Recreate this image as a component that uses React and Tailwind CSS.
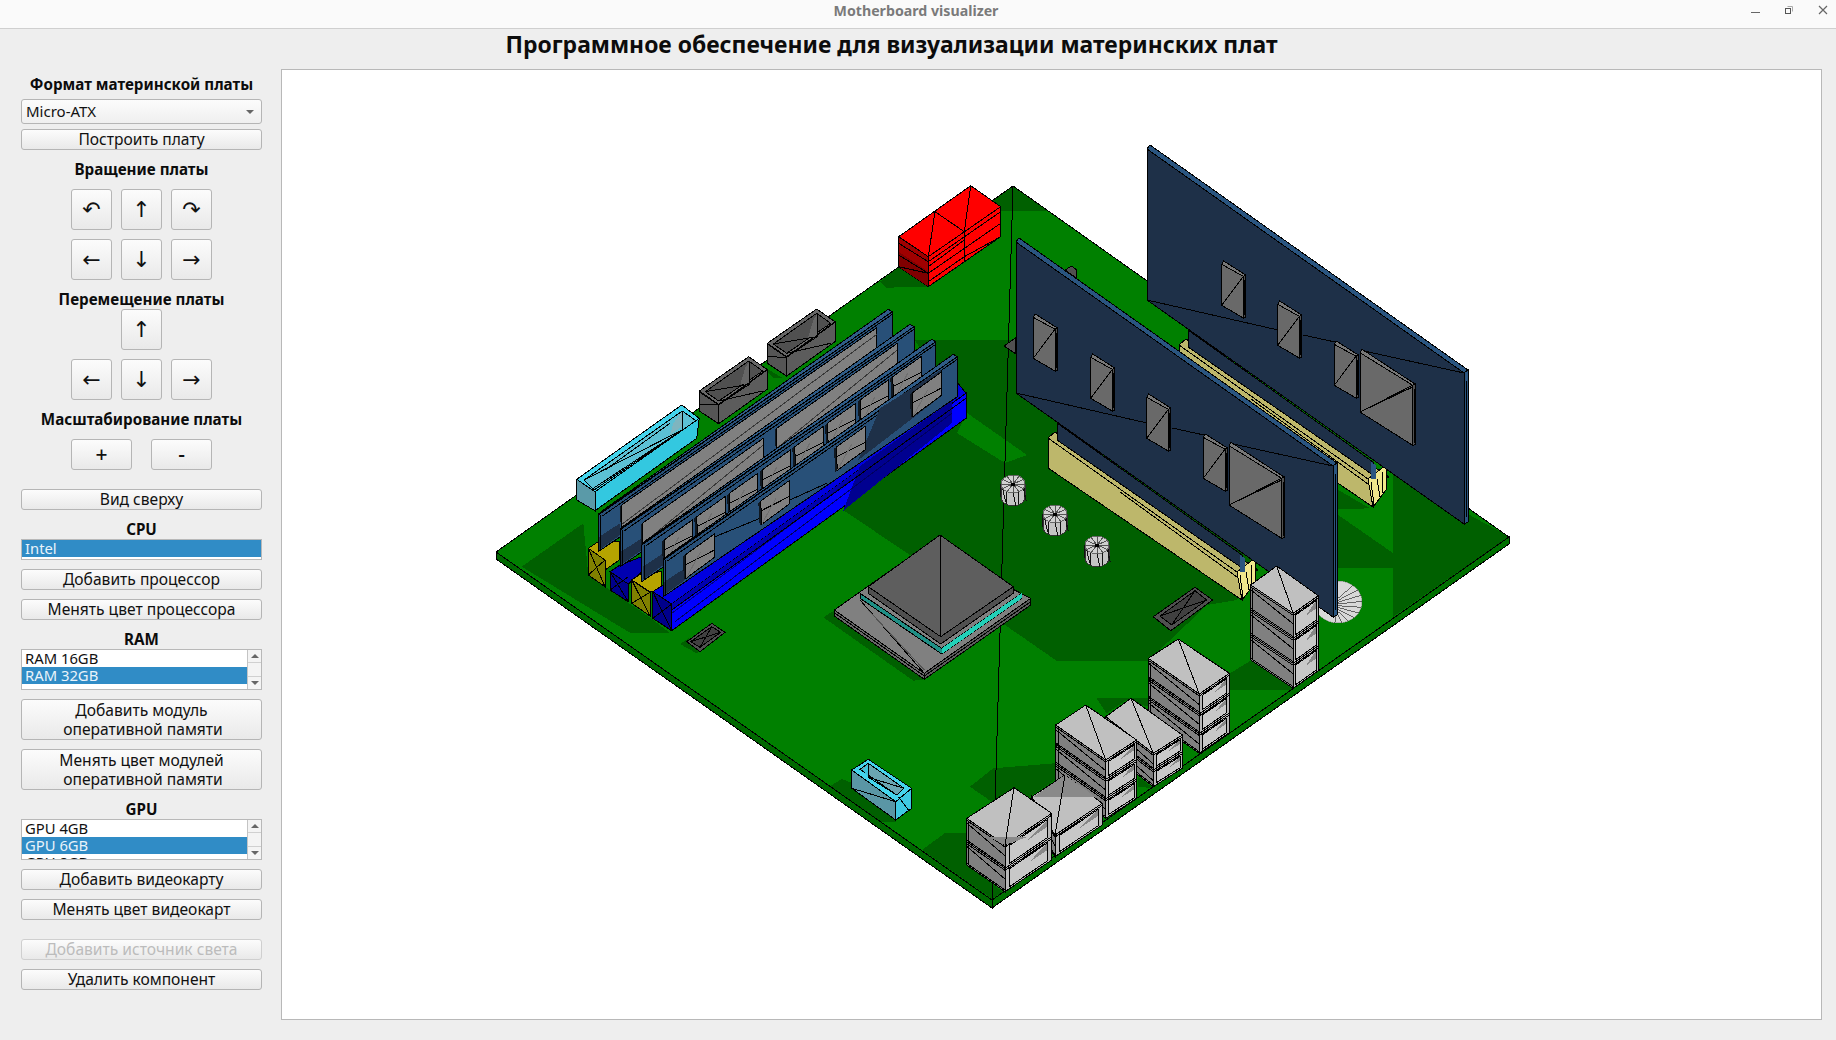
import React from "react";

const Z = { p: [0, 0], z4: [560, 160], z5: [560, 380], z6: [1000, 120], z7: [940, 440], z9: [480, 520], z10: [1230, 440] };
const conv = (z, d, ox = 0, oy = 0) => {
  const s = z === "p" ? 1 : 1 / 3;
  const [x0, y0] = Z[z];
  return d.trim().split(/\s+/).map((p) => {
    const [x, y] = p.split(",").map(Number);
    return `${(x * s + x0 + ox).toFixed(1)},${(y * s + y0 + oy).toFixed(1)}`;
  }).join(" ");
};
const P = ({ z = "p", d, f = "none", s = "#000", ox, oy, w = 1 }) => (
  <polygon points={conv(z, d, ox, oy)} fill={f} stroke={s} strokeWidth={w} />
);
const F = ({ z = "p", d, f, ox, oy }) => <polygon points={conv(z, d, ox, oy)} fill={f} />;
const L = ({ z = "p", d, ox, oy, s = "#000" }) => (
  <polyline points={conv(z, d, ox, oy)} fill="none" stroke={s} strokeWidth="1" />
);

const GREEN = "#008000";
const DARK = "#006000";

function Board() {
  return (
    <g>
      <P d="496,552 992,900 992,908 496,559" f="#006800" />
      <P d="992,900 1509,537 1509,544 992,908" f="#007000" />
      <F d="1013,186 1509,537 992,900 496,552" f={GREEN} />
      <F d="980,211 1013,186 1048,211" f={DARK} />
      <F d="915,340 1030,340 1255,500 1255,560 1237,600 1207,605 1148,661 1057,661 1005,625 910,555 843,510 960,415" f={DARK} />
      <F d="967,413 1027,455 1005,463 957,433" f={GREEN} />
      <F z="z10" d="490,100 838,290 490,530" f={DARK} />
      <F z="z10" d="325,225 490,340 490,383 325,383" f={DARK} />
      <F z="z10" d="325,150 420,205 325,208" f={DARK} />
      <F z="z4" d="960,365 1015,322 1105,380 980,383" f={DARK} />
      <F z="z4" d="610,620 670,655 640,655" f={DARK} />
      <F z="z9" d="125,140 310,10 325,165 520,300 568,338 450,338 420,320" f={DARK} />
      <F z="z9" d="1030,292 1065,270 1335,478 1300,482" f={DARK} />
      <F z="z9" d="600,372 625,355 665,392 650,400" f={DARK} />
      <F z="z9" d="1048,800 1085,777 1120,790 1248,905 1200,905" f={DARK} />
      <F d="922,850 945,833 967,833 967,865 1003,892 992,899" f={DARK} />
      <F z="z7" d="90,1040 160,985 345,970 345,1020 270,1070 160,1090 140,1075" f={DARK} />
      <F z="z7" d="470,775 625,775 625,800 560,780 500,820" f={DARK} />
      <F z="z7" d="870,750 1060,750 1060,745 935,660 870,700" f={DARK} />
      <F z="z7" d="595,1010 640,1045 595,1040" f={DARK} />
      <P d="1013,186 1509,537 992,900 496,552" />
      <L d="1013,186 992,908" />
    </g>
  );
}

function RedBox() {
  const z = "z4";
  return (
    <g>
      <P z={z} d="1016,230 1105,290 1105,380 1016,320" f="#a00000" />
      <F z={z} d="1016,275 1105,335 1105,380 1016,320" f="#800000" />
      <P z={z} d="1105,290 1322,140 1322,230 1105,380" f="#ff0000" />
      <P z={z} d="1016,230 1232,77 1322,140 1105,290" f="#ff0000" />
      <L z={z} d="1125,155 1105,290" />
      <L z={z} d="1232,77 1213,215 1213,305" />
      <L z={z} d="1125,155 1213,215" />
      <L z={z} d="1016,250 1105,305" />
      <L z={z} d="1016,285 1105,340 1016,320" />
      <L z={z} d="1105,305 1322,155" />
      <L z={z} d="1105,340 1322,190" />
      <L z={z} d="1105,320 1213,240" />
      <L z={z} d="1105,365 1213,290 1322,230" />
    </g>
  );
}

function Port({ ox = 0, oy = 0 }) {
  const c = { z: "z4", ox, oy };
  return (
    <g>
      <P {...c} d="622,550 770,447 825,485 680,590" f="#686868" />
      <P {...c} d="640,552 770,460 812,490 680,580" f="#505050" />
      <F {...c} d="760,480 772,462 772,530 745,530" f="#666666" />
      <P {...c} d="622,552 680,592 680,648 622,610" f="#555555" />
      <P {...c} d="680,592 825,487 825,545 680,648" f="#5c5c5c" />
      <L {...c} d="622,590 680,592" />
      <L {...c} d="640,552 770,530" />
      <L {...c} d="680,580 812,550" />
      <L {...c} d="772,460 772,530 680,590" />
    </g>
  );
}

function CyanLarge() {
  const z = "z5";
  return (
    <g>
      <P z={z} d="50,298 365,75 418,115 105,335" f="#45d4ec" />
      <P z={z} d="72,300 367,93 408,122 102,330" f="#5cc0d4" />
      <F z={z} d="340,130 366,95 366,140 330,165" f="#7fb5bf" />
      <P z={z} d="50,298 105,335 105,392 50,360" f="#5a9aa8" />
      <P z={z} d="105,335 418,115 410,175 105,392" f="#33c8e0" />
      <L z={z} d="72,300 366,150 366,95" />
      <L z={z} d="100,325 366,150" />
      <L z={z} d="135,270 330,130" />
    </g>
  );
}

function CyanSmall() {
  const z = "z9";
  return (
    <g>
      <P z={z} d="1115,750 1165,718 1295,805 1247,845" f="#45d4ec" />
      <P z={z} d="1140,748 1165,730 1272,805 1250,825" f="#6aa6b2" />
      <F z={z} d="1147,750 1165,733 1165,770" f="#3fc5dc" />
      <P z={z} d="1115,750 1247,845 1247,900 1115,805" f="#5a96a5" />
      <P z={z} d="1247,845 1295,805 1295,865 1247,900" f="#3fc9e2" />
      <L z={z} d="1165,730 1165,772 1250,825" />
      <L z={z} d="1165,772 1272,805" />
      <L z={z} d="1115,805 1247,845" />
      <L z={z} d="1255,830 1285,870" />
    </g>
  );
}

function Chip({ z = "z5", x, y, w = 87, dy = 62, h = 70 }) {
  return (
    <g>
      <F z={z} d={`${x - 7},${y + 5} ${x},${y} ${x + 3},${y + h} ${x - 3},${y + h + 4}`} f="#101820" />
      <P z={z} d={`${x},${y} ${x + w},${y - dy} ${x + w},${y - dy + h} ${x + 3},${y + h}`} f="#808080" />
      <L z={z} d={`${x},${y + 30} ${x + w},${y + 48 - dy} `} />
      <L z={z} d={`${x + 3},${y + h} ${x + w - 40},${y - 10}`} s="#707070" />
    </g>
  );
}

function Ram() {
  const z = "z5";
  const modBlue = "#285078";
  const navy = "#1e3048";
  const faces = [0, 1, 2, 3].map((i) => [65 * i, 45 * i]);
  const mod = (i) => {
    const [a, b] = faces[i];
    const q = (x, y) => `${x + a},${y + b}`;
    return (
      <g key={i}>
        <P z={z} d={`${q(115, 405)} ${q(997, -205)} ${q(997, -85)} ${q(115, 515)}`} f={modBlue} />
        <F z={z} d={`${q(118, 510)} ${q(180, 465)} ${q(180, 430)} ${q(118, 470)}`} f={navy} />
        <P z={z} d={`${q(115, 403)} ${q(127, 392)} ${q(985, -212)} ${q(997, -205)}`} f="#2f5c88" />
        <L z={z} d={`${q(127, 408)} ${q(997, -197)}`} />
        <L z={z} d={`${q(122, 405)} ${q(122, 510)}`} />
      </g>
    );
  };
  return (
    <g>
      <P z={z} d="85,505 115,485 178,485 178,540 135,570" f="#b5a400" />
      <P z={z} d="85,505 135,540 135,620 85,585" f="#808000" />
      <L z={z} d="85,585 135,540" /><L z={z} d="85,505 135,620" />
      {mod(0)}
      <Strip x0={185} y0={375} x1={950} y1={-157} h={68} />
      <P z={z} d="150,575 180,555 245,530 245,575 205,612" f="#0000b0" />
      <P z={z} d="150,575 205,612 205,665 150,630" f="#00008b" />
      <L z={z} d="150,630 205,590" /><L z={z} d="150,575 205,665" />
      {mod(1)}
      <Strip x0={247} y0={430} x1={610} y1={175} h={72} />
      <Strip x0={650} y0={145} x1={1012} y1={-110} h={70} />
      <P z={z} d="215,600 245,580 305,575 305,630 270,635" f="#b5a400" />
      <P z={z} d="215,600 270,637 270,708 215,670" f="#808000" />
      <L z={z} d="215,670 270,637" /><L z={z} d="215,600 270,708" />
      {mod(2)}
      {[0, 1, 2, 3, 4, 5, 6, 7].map((i) => (
        <Chip key={i} x={312 + 98 * i} y={480 - 70 * i} w={85} dy={60} h={70} />
      ))}
      <P z={z} d="278,635 310,615 1190,5 1218,40 335,672" f="#0000e0" />
      <P z={z} d="335,672 1218,40 1218,115 335,752" f="#0000ff" />
      <F z={z} d="335,672 1175,70 1175,88 335,690" f="#0000b0" />
      <F z={z} d="900,258 1175,62 1175,130 850,392" f="#000090" />
      <L z={z} d="335,700 860,310" s="#000080" />
      <L z={z} d="335,690 1218,55" />
      <L z={z} d="345,725 1175,100" s="#000060" />
      <P z={z} d="278,635 335,672 335,752 278,715" f="#00008b" />
      <L z={z} d="278,715 335,672" /><L z={z} d="278,635 335,752" />
      {mod(3)}
      <F z={z} d="895,240 960,85 1055,25 1142,-30 1142,50" f={navy} />
      <L z={z} d="465,470 600,415" /><L z={z} d="690,360 800,310" />
      {[0, 1, 2, 3].map((i) => (
        <Chip key={i} x={375 + 227 * i} y={525 - 162 * i} w={87} dy={62} h={70} />
      ))}
    </g>
  );
}

function Strip({ x0, y0, x1, y1, h }) {
  const z = "z5";
  return (
    <g>
      <F z={z} d={`${x0 - 5},${y0 + 4} ${x0},${y0} ${x0 + 3},${y0 + h} ${x0 - 3},${y0 + h}`} f="#101820" />
      <P z={z} d={`${x0},${y0} ${x1},${y1} ${x1},${y1 + h} ${x0},${y0 + h}`} f="#808080" />
      <L z={z} d={`${x0},${y0 + h - 10} ${x1},${y1 + 20}`} s="#383838" />
    </g>
  );
}

function Cpu() {
  const z = "z5";
  return (
    <g>
      <P z={z} d="823,690 1093,880 1093,898 823,708" f="#686868" />
      <P z={z} d="1093,880 1412,655 1412,675 1093,898" f="#5c5c5c" />
      <P z={z} d="823,690 1100,495 1412,655 1093,880" f="#808080" />
      <L z={z} d="823,698 1093,888" /><L z={z} d="1093,888 1412,665" />
      <L z={z} d="900,660 1093,880" /><L z={z} d="925,690 1093,870" s="#555" />
      <P z={z} d="900,640 1145,805 1385,640 1385,655 1145,822 900,655" f="#1f8f85" />
      <F z={z} d="1145,805 1385,640 1385,655 1145,822" f="#22d0b8" />
      <P z={z} d="925,620 1142,770 1360,620 1360,640 1142,792 925,640" f="#505050" />
      <P z={z} d="925,620 1140,465 1360,620 1142,770" f="#5e5e5e" />
      <L z={z} d="1142,465 1142,770" />
    </g>
  );
}

function SmallChip({ z = "z5", d1, d2, l }) {
  return (
    <g>
      <P z={z} d={d1} f="#505050" />
      <P z={z} d={d2} f="#404040" />
      {l.map((x, i) => <L key={i} z={z} d={x} />)}
    </g>
  );
}

function Capacitor({ cx, cy }) {
  const rx = 12, ry = 9, h = 13;
  const spokes = Array.from({ length: 12 }, (_, i) => {
    const a = (i / 12) * Math.PI * 2;
    return [cx + Math.cos(a) * rx, cy + Math.sin(a) * ry];
  });
  const side = Array.from({ length: 7 }, (_, i) => {
    const a = Math.PI - (i / 6) * Math.PI;
    const x = cx + Math.cos(a) * rx;
    return [x, cy + Math.sin(a) * ry];
  });
  return (
    <g>
      <path d={`M${cx - rx},${cy} L${cx - rx},${cy + h} A${rx},${ry} 0 0 0 ${cx + rx},${cy + h} L${cx + rx},${cy} Z`} fill="#c4c4c4" stroke="#333" strokeWidth="1" />
      {side.map(([x, y], i) => (
        <line key={i} x1={x} y1={y} x2={x + (i % 2 ? 3 : -1)} y2={y + h} stroke="#111" strokeWidth="1" />
      ))}
      <ellipse cx={cx} cy={cy} rx={rx} ry={ry} fill="#d0d0d0" stroke="#666" strokeWidth="1" />
      {spokes.map(([x, y], i) => (
        <line key={i} x1={cx} y1={cy} x2={x} y2={y} stroke="#555" strokeWidth="1" />
      ))}
      <circle cx={cx} cy={cy + 0.5} r="2" fill="#000" />
    </g>
  );
}

function Disc() {
  const cx = 1338, cy = 602, rx = 24, ry = 21;
  const sp = Array.from({ length: 10 }, (_, i) => -0.9 + (i / 9) * 2.6);
  return (
    <g>
      <ellipse cx={cx} cy={cy} rx={rx} ry={ry} fill="#d8d8d8" stroke="#999" strokeWidth="0.6" />
      {sp.map((a, i) => (
        <line key={i} x1={cx - 2} y1={cy - 2 + i * 1.4} x2={cx + Math.cos(a) * rx} y2={cy + Math.sin(a) * ry} stroke="#333" strokeWidth="0.7" />
      ))}
    </g>
  );
}

function CardChip({ x, y, w, dy, h, ox, oy }) {
  const c = { z: "z6", ox, oy };
  return (
    <g>
      <P {...c} d={`${x},${y + 2} ${x + 6},${y - 8} ${x + w},${y + dy - 4} ${x + w - 6},${y + dy + 2}`} f="#787878" />
      <P {...c} d={`${x + w - 7},${y + dy} ${x + w},${y + dy - 4} ${x + w},${y + dy + h - 2} ${x + w - 7},${y + dy + h}`} f="#505050" />
      <P {...c} d={`${x},${y + 2} ${x + w - 7},${y + dy} ${x + w - 7},${y + dy + h} ${x},${y + h}`} f="#696969" />
      <L {...c} d={`${x},${y + h} ${x + w - 7},${y + dy}`} />
      {w > 100 && <L {...c} d={`${x},${y + h} ${x + w - 7},${y + dy + 5}`} />}
      <L {...c} d={`${x + w - 3},${y + dy + 10} ${x + w - 3},${y + dy + h - 8}`} s="#000" />
    </g>
  );
}

function Gpu({ ox, oy, first = true }) {
  const c = { ox, oy };
  return (
    <g>
      <P {...c} d="1048,438 1055,432 1258,570 1237,575" f="#bdb76b" />
      <P {...c} d="1048,438 1237,572 1242,600 1048,468" f="#bdb76b" />
      <P {...c} d="1237,572 1255,558 1255,583 1242,600" f="#f0e68c" />
      <L {...c} d="1240,575 1243,598" /><L {...c} d="1246,572 1249,590" /><L {...c} d="1251,565 1252,586" />
      <L {...c} d="1120,492 1237,577" />
      <P {...c} d="1016,240 1333,466 1333,617 1016,393" f="#1e3048" />
      <P {...c} d="1016,242 1019,238 1337,463 1333,466" f="#2a5580" />
      <P {...c} d="1333,466 1337,463 1337,615 1333,617" f="#2a5580" />
      <L {...c} d="1335,474 1335,610" />
      <P {...c} d="1057,423 1242,555 1242,568 1057,440" f="#1e3048" />
      <F {...c} d="1240,555 1245,558 1245,572 1240,572" f="#2a5580" />
      <L {...c} d="1016,393 1147,423" />
      <L {...c} d="1172,428 1204,435" />
      <L {...c} d="1233,444 1333,466" />
      {first && <CardChip x={100} y={590} w={72} dy={38} h={125} ox={ox} oy={oy} />}
      <CardChip x={272} y={710} w={72} dy={38} h={125} ox={ox} oy={oy} />
      <CardChip x={440} y={830} w={72} dy={38} h={125} ox={ox} oy={oy} />
      <CardChip x={610} y={950} w={72} dy={38} h={125} ox={ox} oy={oy} />
      <CardChip x={687} y={975} w={165} dy={100} h={180} ox={ox} oy={oy} />
    </g>
  );
}

function Stack({ l, b, r, f, H, tiers, shade }) {
  const z = "z7";
  const pt = (p, dy = 0) => `${p[0]},${p[1] + dy}`;
  const lerp = (a, c, t) => [a[0] + (c[0] - a[0]) * t, a[1] + (c[1] - a[1]) * t];
  const th = H / tiers;
  const els = [];
  for (let i = 0; i < tiers; i++) {
    const y = i * th;
    const a = lerp(f, r, 0.1);
    const e = lerp(f, r, 0.92);
    const tp = 10, bt = th - 6;
    els.push(
      <g key={i}>
        <F z={z} d={`${pt(a, y + tp)} ${pt(e, y + tp)} ${pt(e, y + bt)} ${pt(a, y + bt)}`} f="#c8c8c8" />
        <F z={z} d={`${pt(e, y + tp)} ${pt(e, y + th * 0.45)} ${pt(lerp(f, r, 0.5), y + th * 0.45)}`} f="#888888" />
        <P z={z} d={`${pt(a, y + tp)} ${pt(e, y + tp)} ${pt(e, y + bt)} ${pt(a, y + bt)}`} />
        <L z={z} d={`${pt(l, y + 6)} ${pt(f, y + 6)} ${pt(r, y + 6)}`} />
        <L z={z} d={`${pt(l, y + th)} ${pt(f, y + th)} ${pt(r, y + th)}`} />
        <L z={z} d={`${pt(l, y + th - 5)} ${pt(f, y + th - 5)}`} />
        <L z={z} d={`${pt(l, y + 14)} ${pt(f, y + 32)}`} />
      </g>
    );
  }
  return (
    <g>
      <P z={z} d={`${pt(l)} ${pt(f)} ${pt(f, H)} ${pt(l, H)}`} f="#808080" />
      <P z={z} d={`${pt(f)} ${pt(r)} ${pt(r, H)} ${pt(f, H)}`} f="#b8b8b8" />
      {els}
      <P z={z} d={`${pt(l)} ${pt(b)} ${pt(r)} ${pt(f)}`} f="#c0c0c0" />
      {shade && <F z={z} d={shade} f="#8a8a8a" />}
      <L z={z} d={`${pt(b)} ${pt(f)}`} />
      <L z={z} d={`${pt(l, 8)} ${pt(l, H - 8)}`} />
      <L z={z} d={`${pt(lerp(l, f, 0.05), 8)} ${pt(lerp(l, f, 0.05), H - 4)}`} />
    </g>
  );
}

function Scene() {
  return (
    <svg width="1539" height="948" viewBox="282 70 1539 948" shapeRendering="crispEdges" className="block">
      <Board />
      <RedBox />
      <P z="z6" d="12,678 45,655 45,700" f="#505050" />
      <P z="z6" d="195,450 215,438 230,450 230,475" f="#505050" />
      <Gpu ox={131} oy={-93} first={false} />
      <Disc />
      <Gpu ox={0} oy={0} />
      <Port />
      <Port ox={-68} oy={47.7} />
      <CyanLarge />
      <Ram />
      <Cpu />
      <SmallChip d1="380,785 455,730 495,757 420,815" d2="392,785 455,740 482,757 420,802" l={["392,785 482,757", "420,802 455,740"]} />
      <SmallChip z="z7" d1="640,530 765,442 818,480 692,572" d2="660,528 765,452 800,480 695,555" l={["660,528 800,480", "695,555 765,452"]} />
      <CyanSmall />
      <Capacitor cx={1013} cy={484} />
      <Capacitor cx={1055} cy={514} />
      <Capacitor cx={1097} cy={545} />
      <Stack l={[932, 435]} b={[1010, 378]} r={[1135, 467]} f={[1060, 520]} H={225} tiers={3} />
      <Stack l={[625, 655]} b={[715, 597]} r={[868, 700]} f={[778, 762]} H={178} tiers={3} />
      <Stack l={[497, 830]} b={[573, 775]} r={[727, 885]} f={[640, 940]} H={100} tiers={2} />
      <Stack l={[347, 855]} b={[437, 795]} r={[590, 900]} f={[497, 960]} H={175} tiers={3} />
      <Stack l={[275, 1070]} b={[375, 1005]} r={[487, 1090]} f={[345, 1185]} H={65} tiers={1} shade="278,1072 375,1005 468,1072" />
      <Stack l={[80, 1135]} b={[222, 1043]} r={[335, 1120]} f={[195, 1215]} H={140} tiers={2} shade="145,1190 265,1190 195,1215" />
    </svg>
  );
}

const FONT = "font-['Noto_Sans',sans-serif]";
const btnBase = "flex items-center justify-center rounded-[3px] border border-[#b5b5b5] bg-linear-to-b from-[#fcfcfc] to-[#e9e9e9] text-[#111]";

function Btn({ children, className = "h-[21px]", disabled }) {
  return (
    <div className={`${btnBase} ${className} w-full mt-[9px] text-center text-[15.6px] leading-[19px] ${disabled ? "!text-[#bcbcbc] !border-[#cfcfcf]" : ""}`}>
      {children}
    </div>
  );
}

function Label({ children, className = "mt-[9px]" }) {
  return <div className={`h-[20px] ${className} flex items-center justify-center font-bold text-[15.2px] text-[#0c0c0c]`}>{children}</div>;
}

function Arrow({ children, className = "" }) {
  return (
    <div className={`${btnBase} w-[41px] h-[41px] font-['DejaVu_Sans',sans-serif] text-[22px] ${className}`}>{children}</div>
  );
}

function Row({ children, className = "mt-[9px]" }) {
  return <div className={`flex justify-center gap-[9px] ${className}`}>{children}</div>;
}

function ListBox({ items, selected, height, scroll, className = "" }) {
  return (
    <div className={`flex w-full border border-[#b8b8b8] bg-white overflow-hidden ${height} ${className}`}>
      <div className="flex-1 min-w-0">
        {items.map((t, i) => (
          <div key={t} className={`h-[17px] px-[3px] leading-[17px] text-[14.8px] ${i === selected ? "bg-[#308cc6] text-[#e9f3fa]" : "text-[#111]"}`}>{t}</div>
        ))}
      </div>
      {scroll && (
        <div className="w-[14px] shrink-0 flex flex-col border-l border-[#c4c4c4] bg-[#f4f4f4]">
          <div className="h-[13px] flex items-center justify-center border-b border-[#d0d0d0]">
            <div className="w-0 h-0 border-x-[4px] border-x-transparent border-b-[4px] border-b-[#666]" />
          </div>
          <div className="flex-1" />
          <div className="h-[13px] flex items-center justify-center border-t border-[#d0d0d0]">
            <div className="w-0 h-0 border-x-[4px] border-x-transparent border-t-[4px] border-t-[#666]" />
          </div>
        </div>
      )}
    </div>
  );
}

function Sidebar() {
  return (
    <div className="w-[241px] flex flex-col shrink-0">
      <Label className="mt-[5px]">Формат материнской платы</Label>
      <div className="mt-[5px] h-[25px] flex items-center justify-between pl-[4px] pr-[7px] rounded-[3px] border border-[#b5b5b5] bg-linear-to-b from-[#fcfcfc] to-[#efefef] text-[#111] text-[15px]">
        <span>Micro-ATX</span>
        <div className="w-0 h-0 border-x-[4px] border-x-transparent border-t-[4px] border-t-[#666]" />
      </div>
      <Btn className="h-[21px] !mt-[5px]">Построить плату</Btn>
      <Label>Вращение платы</Label>
      <Row className="mt-[10px]"><Arrow>↶</Arrow><Arrow>↑</Arrow><Arrow>↷</Arrow></Row>
      <Row><Arrow>←</Arrow><Arrow>↓</Arrow><Arrow>→</Arrow></Row>
      <Label>Перемещение платы</Label>
      <Row className="mt-0"><Arrow>↑</Arrow></Row>
      <Row><Arrow>←</Arrow><Arrow>↓</Arrow><Arrow>→</Arrow></Row>
      <Label>Масштабирование платы</Label>
      <div className="flex justify-center gap-[19px] mt-[10px]">
        <div className={`${btnBase} w-[61px] h-[31px] text-[21px] font-medium`}>+</div>
        <div className={`${btnBase} w-[61px] h-[31px] text-[21px] font-medium`}>-</div>
      </div>
      <Btn className="h-[21px] !mt-[19px]">Вид сверху</Btn>
      <Label>CPU</Label>
      <ListBox items={["Intel"]} selected={0} height="h-[21px]" />
      <Btn>Добавить процессор</Btn>
      <Btn>Менять цвет процессора</Btn>
      <Label>RAM</Label>
      <ListBox items={["RAM 16GB", "RAM 32GB"]} selected={1} height="h-[41px]" scroll />
      <Btn className="h-[41px]"><span>Добавить модуль<br /><span className="pl-[3px]">оперативной памяти</span></span></Btn>
      <Btn className="h-[41px]"><span>Менять цвет модулей<br /><span className="pl-[3px]">оперативной памяти</span></span></Btn>
      <Label>GPU</Label>
      <ListBox items={["GPU 4GB", "GPU 6GB", "GPU 8GB"]} selected={1} height="h-[41px]" scroll />
      <Btn>Добавить видеокарту</Btn>
      <Btn>Менять цвет видеокарт</Btn>
      <Btn className="h-[21px] !mt-[19px]" disabled>Добавить источник света</Btn>
      <Btn>Удалить компонент</Btn>
    </div>
  );
}

function TitleBar() {
  return (
    <div className="relative h-[29px] shrink-0 flex items-center justify-center border-b border-[#cfcfcf] bg-[#fafafa]">
      <span className="text-[14.2px] font-bold text-[#7a7a7a] pb-[7px] pr-[4px]">Motherboard visualizer</span>
      <div className="absolute right-0 top-0 h-[28px]">
        <svg width="85" height="28" viewBox="0 0 85 28" className="block">
          <line x1="0" y1="12.5" x2="9" y2="12.5" stroke="#666" strokeWidth="1" />
          <rect x="34.5" y="8.5" width="5" height="5" fill="none" stroke="#555" strokeWidth="1" />
          <path d="M36.5 6.5h5v5" fill="none" stroke="#aaa" strokeWidth="1" />
          <path d="M68 6l8 8M76 6l-8 8" stroke="#666" strokeWidth="1.2" />
        </svg>
      </div>
    </div>
  );
}

export default function App() {
  return (
    <div className={`w-[1836px] h-[1040px] flex flex-col overflow-hidden bg-[#eeeeee] ${FONT}`}>
      <TitleBar />
      <div className="h-[40px] w-[1783px] shrink-0 flex items-center justify-center pb-[7px] text-[22.9px] font-bold text-[#0c0c0c]">
        Программное обеспечение для визуализации материнских плат
      </div>
      <div className="flex pl-[21px] gap-[19px]">
        <Sidebar />
        <div className="w-[1541px] h-[951px] border border-[#b8b8b8] bg-white overflow-hidden">
          <Scene />
        </div>
      </div>
    </div>
  );
}
